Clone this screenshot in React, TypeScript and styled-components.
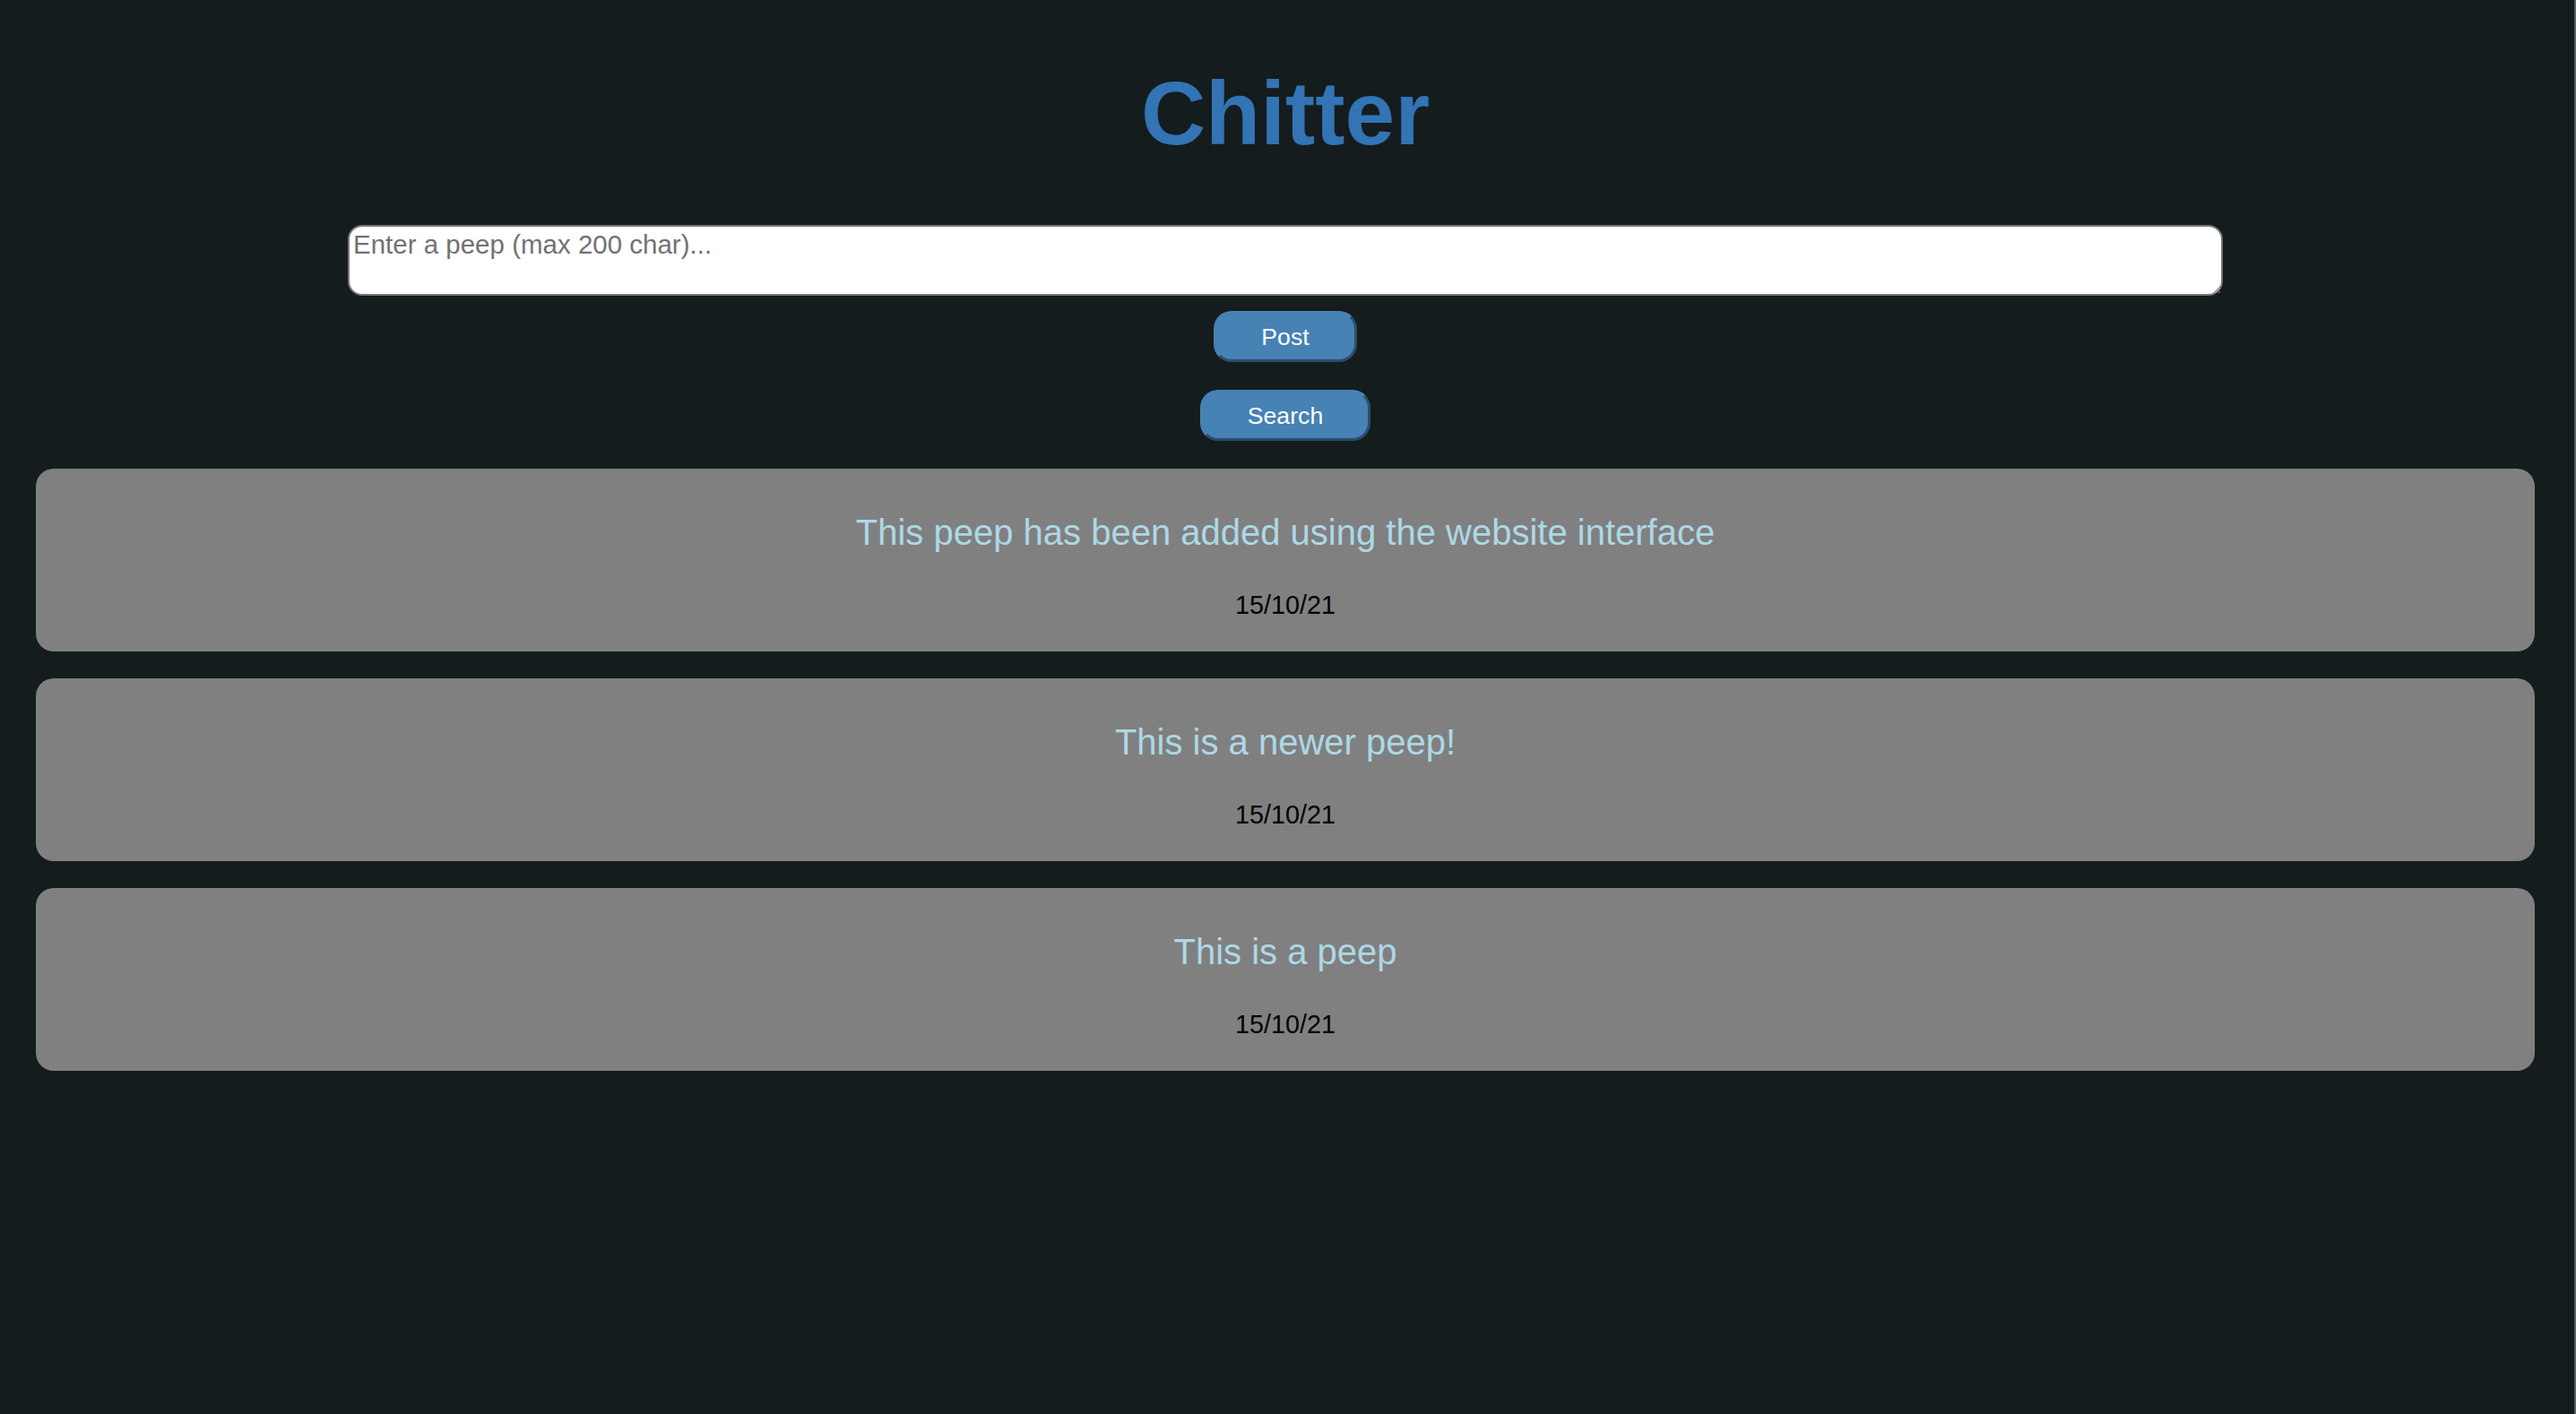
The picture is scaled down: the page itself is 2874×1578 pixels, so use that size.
import React from "react";
import styled, { createGlobalStyle } from "styled-components";

const GlobalStyle = createGlobalStyle`
  html {
    background: linear-gradient(to right, #151c1e calc(100% - 2px), #5a5f61 calc(100% - 2px));
    min-height: 100%;
  }
  body {
    margin: 0;
    font-family: "Liberation Sans", Arial, Helvetica, sans-serif;
  }
`;

const Page = styled.main`
  display: flex;
  flex-direction: column;
  align-items: center;
  padding: 69px 46px 40px 40px;
`;

const Title = styled.h1`
  margin: 0;
  font-size: 100px;
  line-height: 115px;
  font-weight: 700;
  color: #3274b4;
`;

const PeepForm = styled.form`
  display: flex;
  flex-direction: column;
  align-items: center;
  margin-top: 67px;
`;

const PeepInput = styled.textarea`
  display: block;
  box-sizing: border-box;
  width: 2092px;
  height: 79px;
  margin: 0;
  padding: 3px 4px;
  border: 2px solid #767676;
  border-radius: 16px;
  background: #ffffff;
  font-family: "Liberation Sans", Arial, Helvetica, sans-serif;
  font-size: 29.5px;
  line-height: 34px;
  color: #000;
  outline: none;
  resize: both;

  &::placeholder {
    color: #727272;
  }
`;

const ActionButton = styled.button<{ $gap: number }>`
  margin-top: ${(p) => p.$gap}px;
  padding: 10px 50px 9px;
  border: 3px solid;
  border-color: #4682b4 #2c4e6b #2c4e6b #4682b4;
  border-radius: 20px;
  background: #4682b4;
  color: #ffffff;
  font-family: "Liberation Sans", Arial, Helvetica, sans-serif;
  font-size: 26.67px;
  line-height: 32px;
  cursor: pointer;
`;

const Feed = styled.section`
  align-self: stretch;
  display: flex;
  flex-direction: column;
  gap: 30px;
  margin-top: 31px;
`;

const PeepCard = styled.article`
  display: flex;
  flex-direction: column;
  align-items: center;
  height: 204px;
  box-sizing: border-box;
  padding-top: 48px;
  border-radius: 20px;
  background: #808080;
`;

const PeepText = styled.p`
  margin: 0;
  font-size: 40px;
  line-height: 46px;
  color: #add8e6;
`;

const PeepDate = styled.p`
  margin: 42px 0 0;
  font-size: 28.8px;
  line-height: 33px;
  color: #000000;
`;

const peeps = [
  { id: 3, text: "This peep has been added using the website interface", date: "15/10/21" },
  { id: 2, text: "This is a newer peep!", date: "15/10/21" },
  { id: 1, text: "This is a peep", date: "15/10/21" },
];

export default function App() {
  return (
    <>
      <GlobalStyle />
      <Page>
        <Title>Chitter</Title>
        <PeepForm onSubmit={(e) => e.preventDefault()}>
          <PeepInput placeholder="Enter a peep (max 200 char)..." maxLength={200} />
          <ActionButton $gap={17} type="submit">Post</ActionButton>
          <ActionButton $gap={31} type="button">Search</ActionButton>
        </PeepForm>
        <Feed>
          {peeps.map((p) => (
            <PeepCard key={p.id}>
              <PeepText>{p.text}</PeepText>
              <PeepDate>{p.date}</PeepDate>
            </PeepCard>
          ))}
        </Feed>
      </Page>
    </>
  );
}
